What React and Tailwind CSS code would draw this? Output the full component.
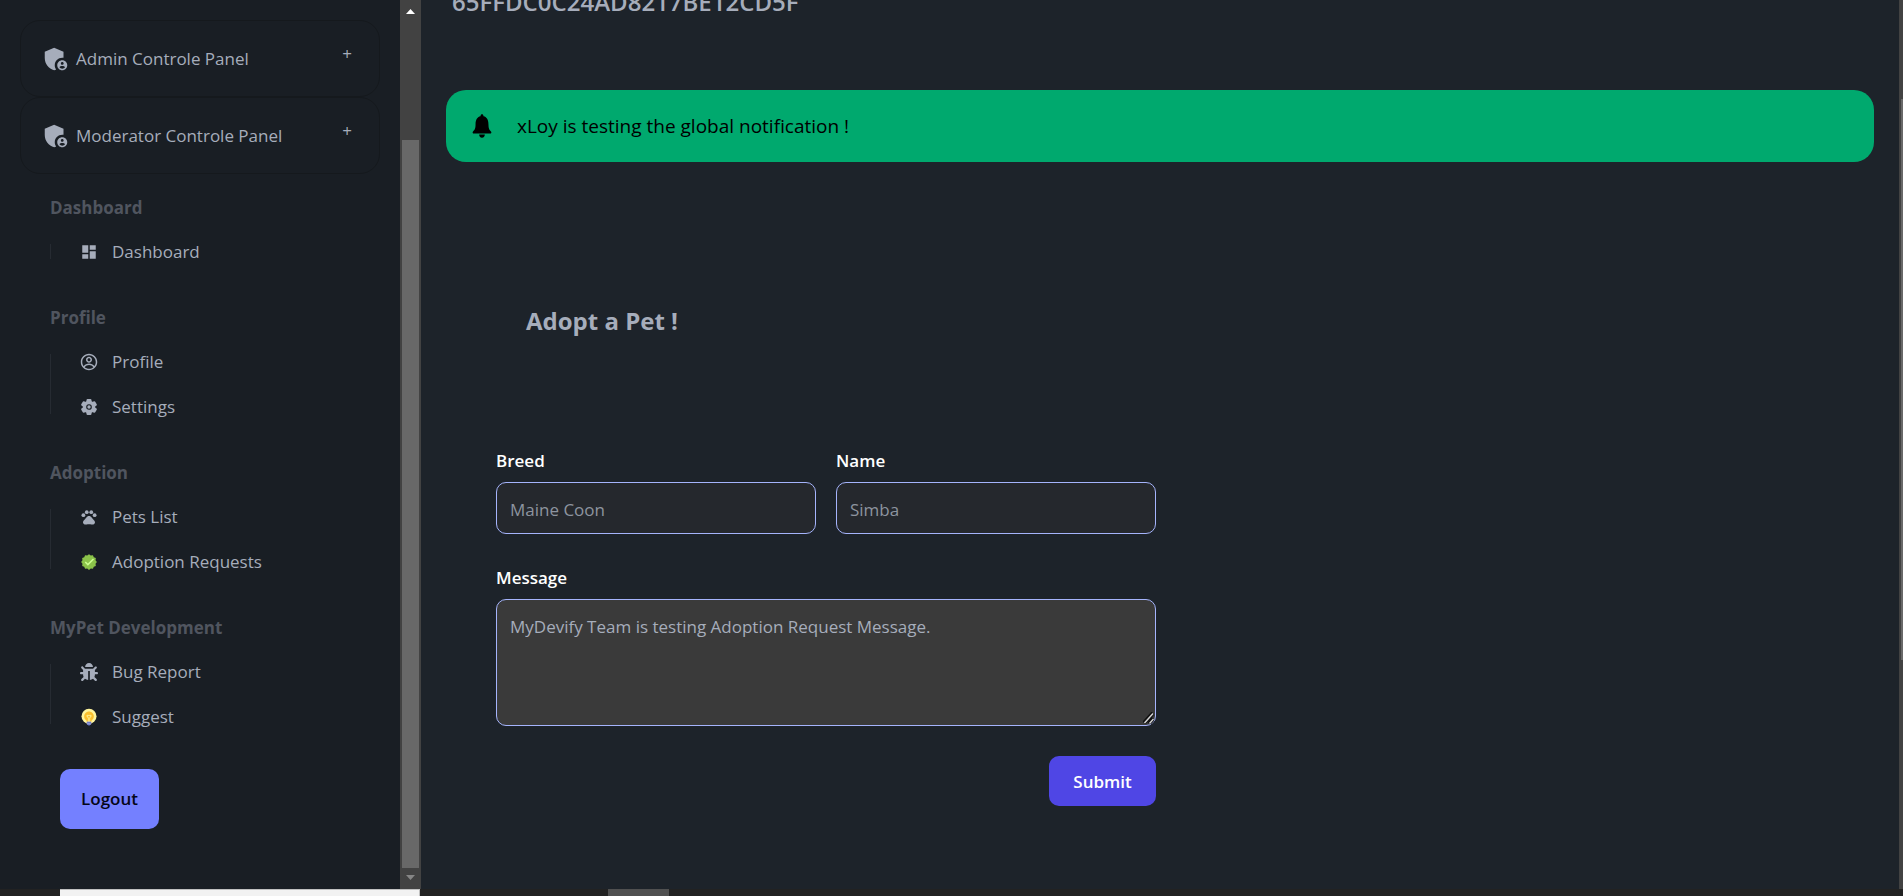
import { CgProfile } from "react-icons/cg";
import { FaBug } from "react-icons/fa";
import { FcApproval, FcIdea } from "react-icons/fc";
import { IoIosNotifications } from "react-icons/io";
import { IoSettings } from "react-icons/io5";
import { MdAdminPanelSettings, MdDashboard, MdPets } from "react-icons/md";

const panels = ["Admin Controle Panel", "Moderator Controle Panel"];

const sections = [
  { title: "Dashboard", items: [{ label: "Dashboard", Icon: MdDashboard }] },
  {
    title: "Profile",
    items: [
      { label: "Profile", Icon: CgProfile },
      { label: "Settings", Icon: IoSettings },
    ],
  },
  {
    title: "Adoption",
    items: [
      { label: "Pets List", Icon: MdPets },
      { label: "Adoption Requests", Icon: FcApproval },
    ],
  },
  {
    title: "MyPet Development",
    items: [
      { label: "Bug Report", Icon: FaBug },
      { label: "Suggest", Icon: FcIdea },
    ],
  },
];

function PanelButton({ label }) {
  return (
    <button
      type="button"
      className="flex h-[77px] w-full items-center gap-[5px] rounded-[20px] border border-[#15191d] pr-[27px] pl-5 text-left"
    >
      <MdAdminPanelSettings size={30} aria-hidden="true" />
      <span className="flex-1">{label}</span>
      <span className="pb-[10px]" aria-hidden="true">+</span>
    </button>
  );
}

function NavSection({ title, items }) {
  return (
    <section className="pl-[50px]">
      <h2 className="flex h-[45px] items-center font-bold text-[#50555f]">{title}</h2>
      <div className="flex">
        <div className="mt-[14px] mb-4 w-px bg-[#262b32]" />
        <ul className="flex-1">
          {items.map(({ label, Icon }) => (
            <li key={label}>
              <a href="#" className="flex h-[45px] items-center gap-[14px] pb-px pl-[29px]">
                <Icon size={18} aria-hidden="true" />
                {label}
              </a>
            </li>
          ))}
        </ul>
      </div>
    </section>
  );
}

function Sidebar() {
  return (
    <aside className="flex w-[400px] shrink-0 flex-col overflow-hidden bg-[#191e24]">
      <div className="px-5 pt-5">
        {panels.map((label) => (
          <PanelButton key={label} label={label} />
        ))}
      </div>
      <nav className="mt-[11px] flex flex-col gap-5">
        {sections.map((section) => (
          <NavSection key={section.title} {...section} />
        ))}
      </nav>
      <button
        type="button"
        className="mt-[29px] ml-[60px] h-[60px] w-[99px] shrink-0 rounded-[10px] bg-[#7480ff] font-semibold text-[#050617]"
      >
        Logout
      </button>
    </aside>
  );
}

function SidebarScrollbar() {
  return (
    <div className="flex w-[21px] shrink-0 flex-col items-center bg-[#424242]" aria-hidden="true">
      <div className="flex h-[21px] items-center pt-[2px]">
        <svg width="9" height="5" viewBox="0 0 9 5">
          <path d="M4.5 0L9 5H0z" fill="#ffffff" />
        </svg>
      </div>
      <div className="flex w-full flex-1 justify-center pt-[119px]">
        <div className="w-[17px] bg-[#686868]" />
      </div>
      <div className="flex h-[21px] items-center pb-[2px]">
        <svg width="9" height="5" viewBox="0 0 9 5">
          <path d="M0 0H9L4.5 5z" fill="#868686" />
        </svg>
      </div>
    </div>
  );
}

const fieldClass =
  "w-full rounded-[10px] border border-[#a5b4fc] px-[13px] outline-none";

function TextField({ id, label, placeholder }) {
  return (
    <div className="flex flex-1 flex-col gap-[9px]">
      <label htmlFor={id} className="leading-6 font-semibold text-white">{label}</label>
      <input
        id={id}
        type="text"
        placeholder={placeholder}
        className={`${fieldClass} h-[52px] bg-[#25282d] pt-[2px] placeholder:text-[#8d949f]`}
      />
    </div>
  );
}

function ResizeGrip() {
  return (
    <svg
      className="pointer-events-none absolute right-[2px] bottom-[2px]"
      width="11"
      height="12"
      viewBox="0 0 11 12"
      aria-hidden="true"
    >
      <path d="M1 11L10 1M6 11.500L10.500 6.500" stroke="#111111" strokeWidth="4" />
      <path d="M1.500 11L10 1.500M6.500 11.500L10.500 7" stroke="#d4d4d4" strokeWidth="1.500" />
    </svg>
  );
}

function AdoptionForm() {
  return (
    <form className="mt-28 ml-[75px] w-full max-w-[660px]" onSubmit={(e) => e.preventDefault()}>
      <div className="flex gap-5">
        <TextField id="breed" label="Breed" placeholder="Maine Coon" />
        <TextField id="name" label="Name" placeholder="Simba" />
      </div>
      <div className="mt-8 flex flex-col gap-[9px]">
        <label htmlFor="message" className="leading-6 font-semibold text-white">Message</label>
        <div className="relative flex">
          <textarea
            id="message"
            defaultValue="MyDevify Team is testing Adoption Request Message."
            className={`${fieldClass} h-[127px] resize-none bg-[#3a3a3a] py-[13px] leading-7 text-[#a6adbb]`}
          />
          <ResizeGrip />
        </div>
      </div>
      <div className="mt-[30px] flex justify-end">
        <button type="submit" className="h-[50px] w-[107px] rounded-[10px] bg-[#4f46e5] pt-px font-semibold text-white">
          Submit
        </button>
      </div>
    </form>
  );
}

function Main() {
  return (
    <main className="min-w-0 flex-1 overflow-hidden bg-[#1d232a]">
      <h1 className="-mt-[14px] ml-[31px] text-2xl font-semibold uppercase">65ffdc0c24ad8217be12cd5f</h1>
      <div
        role="alert"
        className="mt-[72px] mr-[25px] ml-[25px] flex h-[72px] items-center gap-5 rounded-[20px] bg-[#00a96e] pl-[21px] text-[19px] text-black"
      >
        <IoIosNotifications size={30} aria-hidden="true" />
        <span>xLoy is testing the global notification !</span>
      </div>
      <h2 className="mt-[143px] ml-[105px] text-2xl font-bold">Adopt a Pet !</h2>
      <AdoptionForm />
    </main>
  );
}

function PageScrollbar() {
  return (
    <div className="flex w-1 shrink-0 flex-col items-end bg-[#424242] pt-[99px]" aria-hidden="true">
      <div className="h-[71%] w-[2px] bg-[#686868]" />
    </div>
  );
}

export default function App() {
  return (
    <div className="flex h-screen flex-col bg-[#222222] font-['Open_Sans','Noto_Sans',sans-serif] text-[17px] text-[#a6adbb]">
      <div className="flex min-h-0 flex-1">
        <Sidebar />
        <SidebarScrollbar />
        <Main />
        <PageScrollbar />
      </div>
      <div className="flex h-[7px] shrink-0 pl-[60px]" aria-hidden="true">
        <div className="w-[360px] border-t border-r border-[#c0c0c0] bg-[#f2f2f2]" />
        <div className="ml-[188px] w-[61px] bg-[#505050]" />
      </div>
    </div>
  );
}
